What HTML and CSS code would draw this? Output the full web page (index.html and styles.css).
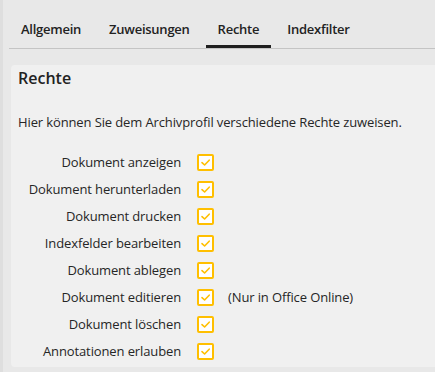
FILE: index.html
```html
<!DOCTYPE html>
<html lang="de">
<head>
<meta charset="utf-8">
<link rel="stylesheet" href="styles.css">
</head>
<body>
<div class="page">
  <nav class="tabs">
    <div class="tab">Allgemein</div>
    <div class="tab">Zuweisungen</div>
    <div class="tab active">Rechte</div>
    <div class="tab">Indexfilter</div>
  </nav>
  <section class="card">
    <h2 class="title">Rechte</h2>
    <p class="intro">Hier können Sie dem Archivprofil verschiedene Rechte zuweisen.</p>
    <div class="rights">
      <div class="label">Dokument anzeigen</div>
      <div class="cb"><svg viewBox="0 0 17 17"><path d="M5 8.6 L7.6 11 L12.2 6.2"/></svg></div>
      <div class="note"></div>

      <div class="label">Dokument herunterladen</div>
      <div class="cb"><svg viewBox="0 0 17 17"><path d="M5 8.6 L7.6 11 L12.2 6.2"/></svg></div>
      <div class="note"></div>

      <div class="label">Dokument drucken</div>
      <div class="cb"><svg viewBox="0 0 17 17"><path d="M5 8.6 L7.6 11 L12.2 6.2"/></svg></div>
      <div class="note"></div>

      <div class="label">Indexfelder bearbeiten</div>
      <div class="cb"><svg viewBox="0 0 17 17"><path d="M5 8.6 L7.6 11 L12.2 6.2"/></svg></div>
      <div class="note"></div>

      <div class="label">Dokument ablegen</div>
      <div class="cb"><svg viewBox="0 0 17 17"><path d="M5 8.6 L7.6 11 L12.2 6.2"/></svg></div>
      <div class="note"></div>

      <div class="label">Dokument editieren</div>
      <div class="cb"><svg viewBox="0 0 17 17"><path d="M5 8.6 L7.6 11 L12.2 6.2"/></svg></div>
      <div class="note">(Nur in Office Online)</div>

      <div class="label">Dokument löschen</div>
      <div class="cb"><svg viewBox="0 0 17 17"><path d="M5 8.6 L7.6 11 L12.2 6.2"/></svg></div>
      <div class="note"></div>

      <div class="label">Annotationen erlauben</div>
      <div class="cb"><svg viewBox="0 0 17 17"><path d="M5 8.6 L7.6 11 L12.2 6.2"/></svg></div>
      <div class="note"></div>
    </div>
  </section>
</div>
</body>
</html>
```

FILE: styles.css
```css
html, body {
  margin: 0;
  padding: 0;
  height: 100%;
}
body {
  background: #dedede;
  font-family: "Open Sans", "Noto Sans", sans-serif;
  color: #262626;
  overflow: hidden;
}
.page {
  margin-left: 3px;
  height: 100%;
  background: #e8e8e8;
  padding-left: 6px;
}
.tabs {
  display: flex;
  gap: 4px;
  padding-top: 17px;
  border-bottom: 1px solid #c4c4c4;
}
.tab {
  padding: 3px 12px 7px;
  font-size: 13px;
  font-weight: 600;
  letter-spacing: -0.25px;
  line-height: 18px;
  color: #222;
  border-bottom: 3px solid transparent;
}
.tab.active {
  border-bottom-color: #1f1f1f;
}
.card {
  margin: 16px 0 0 2px;
  background: #f0f0f0;
  border-radius: 4px 0 0 4px;
  padding: 2px 7px 7px;
}
.title {
  margin: 0;
  font-size: 16px;
  font-weight: 600;
  line-height: 22px;
  color: #222;
}
.intro {
  margin: 24px 0 23px;
  font-size: 13px;
  letter-spacing: -0.12px;
  line-height: 18px;
  color: #262626;
}
.rights {
  display: grid;
  grid-template-columns: 163px 17px auto;
  column-gap: 16px;
  row-gap: 10px;
  align-items: center;
}
.label {
  text-align: right;
  font-size: 13px;
  letter-spacing: -0.12px;
  line-height: 17px;
}
.note {
  font-size: 13px;
  letter-spacing: -0.12px;
  line-height: 17px;
  margin-left: -2px;
}
.cb {
  width: 17px;
  height: 17px;
  box-sizing: border-box;
  border: 2px solid #ffbf00;
  border-radius: 2px;
  background: #fff;
}
.cb svg {
  display: block;
  width: 17px;
  height: 17px;
  margin: -2px;
}
.cb path {
  fill: none;
  stroke: #ffbf00;
  stroke-width: 1.6;
  stroke-linecap: round;
  stroke-linejoin: round;
}
```
